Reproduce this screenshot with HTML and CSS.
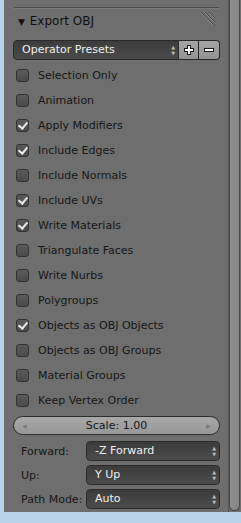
FILE: index.html
```html
<!DOCTYPE html>
<html lang="en">
<head>
    <meta charset="UTF-8">
    <title>Export OBJ</title>
    <link rel="stylesheet" href="styles.css">
</head>
<body>
    <div class="region">
        <div class="panel">
            <div class="header">
                <span class="tri">&#9660;</span> Export OBJ
                <svg class="grip" width="16" height="16" viewBox="0 0 16 16">
                    <path d="M1 1 L15 15 M5 1 L15 11 M9 1 L15 7" stroke="#4a4a4a" stroke-width="1"/>
                    <path d="M1 2 L14 15 M5 2 L14 11 M9 2 L14 7" stroke="#8a8a8a" stroke-width="1"/>
                </svg>
            </div>

            <div class="presets">
                <div class="menu">Operator Presets<span class="updown">&#9650;<br>&#9660;</span></div>
                <div class="pbtn">
                    <svg width="14" height="14" viewBox="0 0 14 14"><path d="M7 2 V12 M2 7 H12" stroke="#1a1a1a" stroke-width="4"/><path d="M7 3 V11 M3 7 H11" stroke="#fff" stroke-width="2"/></svg>
                </div>
                <div class="pbtn last">
                    <svg width="14" height="14" viewBox="0 0 14 14"><path d="M2 7 H12" stroke="#1a1a1a" stroke-width="4"/><path d="M3 7 H11" stroke="#fff" stroke-width="2"/></svg>
                </div>
            </div>

            <div class="opts">
                <div class="opt"><span class="box"></span>Selection Only</div>
                <div class="opt"><span class="box"></span>Animation</div>
                <div class="opt"><span class="box on"></span>Apply Modifiers</div>
                <div class="opt"><span class="box on"></span>Include Edges</div>
                <div class="opt"><span class="box"></span>Include Normals</div>
                <div class="opt"><span class="box on"></span>Include UVs</div>
                <div class="opt"><span class="box on"></span>Write Materials</div>
                <div class="opt"><span class="box"></span>Triangulate Faces</div>
                <div class="opt"><span class="box"></span>Write Nurbs</div>
                <div class="opt"><span class="box"></span>Polygroups</div>
                <div class="opt"><span class="box on"></span>Objects as OBJ Objects</div>
                <div class="opt"><span class="box"></span>Objects as OBJ Groups</div>
                <div class="opt"><span class="box"></span>Material Groups</div>
                <div class="opt"><span class="box"></span>Keep Vertex Order</div>
            </div>

            <div class="slider">
                <span class="arr">&#9664;</span>
                <span>Scale: 1.00</span>
                <span class="arr">&#9654;</span>
            </div>

            <div class="field"><span class="lbl">Forward:</span><div class="menu">-Z Forward<span class="updown">&#9650;<br>&#9660;</span></div></div>
            <div class="field"><span class="lbl">Up:</span><div class="menu">Y Up<span class="updown">&#9650;<br>&#9660;</span></div></div>
            <div class="field"><span class="lbl">Path Mode:</span><div class="menu">Auto<span class="updown">&#9650;<br>&#9660;</span></div></div>
        </div>
        <div class="scroll"><div class="thumb"></div></div>
    </div>
</body>
</html>
```
FILE: styles.css
```css
body {
    margin: 0;
    width: 241px;
    height: 523px;
    background-color: #b9d1ea;
    font-family: 'DejaVu Sans', sans-serif;
    font-size: 11px;
    color: #161616;
    overflow: hidden;
}
.region {
    margin-left: 4px;
    height: 512px;
    display: flex;
    background-color: #6e6e6e;
}
.panel {
    flex: 1;
    padding: 7px 8px 0 9px;
}
.header {
    position: relative;
    height: 26px;
    border-top: 1px solid #4c4c4c;
    box-shadow: inset 0 1px 0 #7a7a7a;
    margin: 0 1px 0 1px;
    padding-left: 4px;
    line-height: 27px;
    font-size: 12px;
    color: #111;
}
.tri {
    font-size: 9px;
    margin-right: 1px;
}
.grip {
    position: absolute;
    right: 3px;
    top: 3px;
}
.presets {
    display: flex;
    height: 20px;
    margin-top: 6px;
}
.menu {
    position: relative;
    flex: 1;
    box-sizing: border-box;
    height: 20px;
    line-height: 18px;
    padding-left: 8px;
    color: #f0f0f0;
    border: 1px solid #2a2a2a;
    border-radius: 4px;
    background: linear-gradient(#3c3c3c, #4b4b4b);
}
.presets .menu {
    border-radius: 4px 0 0 4px;
    padding-left: 8px;
}
.updown {
    position: absolute;
    right: 3px;
    top: 3px;
    font-size: 5px;
    line-height: 6px;
    color: #bbb;
}
.pbtn {
    width: 20px;
    height: 20px;
    box-sizing: border-box;
    border: 1px solid #2a2a2a;
    border-left: none;
    background: linear-gradient(#a5a5a5, #939393);
    display: flex;
    align-items: center;
    justify-content: center;
}
.pbtn.last {
    width: 21px;
    border-radius: 0 4px 4px 0;
}
.opts {
    margin-top: 3px;
}
.opt {
    display: flex;
    align-items: center;
    height: 25px;
    padding-left: 3px;
}
.box {
    position: relative;
    width: 13px;
    height: 13px;
    box-sizing: border-box;
    border: 1px solid #333;
    border-radius: 3px;
    background: linear-gradient(#5a5a5a, #4a4a4a);
    margin-right: 9px;
}
.box.on::after {
    content: "";
    position: absolute;
    left: 3px;
    top: 0px;
    width: 4px;
    height: 7px;
    border: solid #e8e8e8;
    border-width: 0 2px 2px 0;
    transform: rotate(40deg);
}
.slider {
    display: flex;
    justify-content: space-between;
    align-items: center;
    height: 19px;
    box-sizing: border-box;
    margin-top: 3px;
    padding: 0 8px;
    border: 1px solid #2e2e2e;
    border-radius: 10px;
    background: linear-gradient(#a8a8a8, #979797);
}
.arr {
    font-size: 6px;
    color: #7a7a7a;
}
.field {
    display: flex;
    align-items: center;
    height: 20px;
    margin-top: 6px;
}
.field + .field {
    margin-top: 4px;
}
.lbl {
    width: 73px;
    padding-left: 8px;
    box-sizing: border-box;
}
.scroll {
    width: 12px;
    border-left: 1px solid #575757;
    background-color: #6e6e6e;
}
.thumb {
    height: 511px;
    margin-right: 1px;
    box-sizing: border-box;
    border: 1px solid #4a4a4a;
    border-top: none;
    border-radius: 0 0 6px 6px;
    background: linear-gradient(90deg, #8e8e8e, #868686);
}
```
